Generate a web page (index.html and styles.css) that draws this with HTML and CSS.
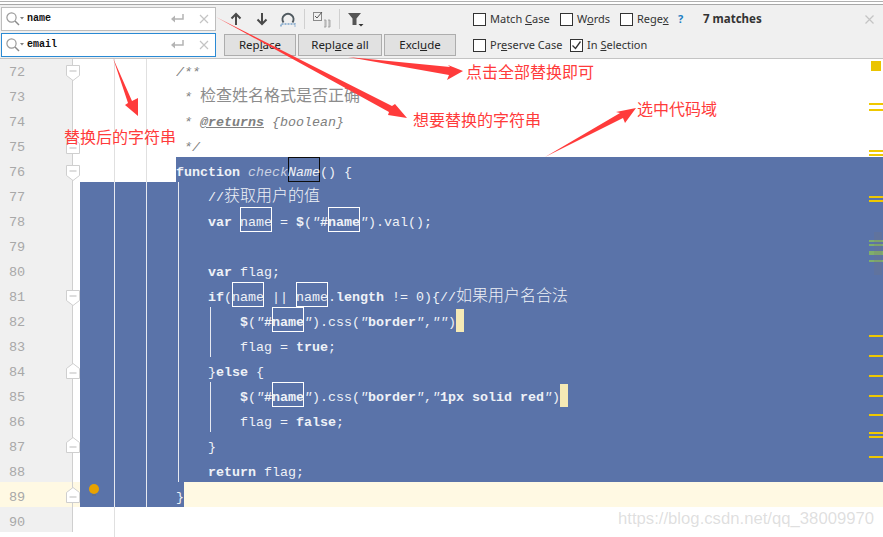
FILE: index.html
```html
<!DOCTYPE html>
<html lang="zh">
<head>
<meta charset="utf-8">
<title>Replace in editor</title>
<link rel="stylesheet" href="styles.css">
</head>
<body>
<div class="page">
  <div class="topstrip"></div>
  <div class="bar">
    <div class="field">
      <svg class="ficon" width="20" height="16" viewBox="0 0 20 16"><circle cx="6.5" cy="6.5" r="4.6" fill="none" stroke="#9a9a9a" stroke-width="1.2"/><path d="M10 10l4 4" stroke="#8a8a8a" stroke-width="1.4"/><path d="M15 6h4l-2 2.500z" fill="#808080"/></svg>
      <span class="ftext">name</span>
      <svg class="fret" width="14" height="12" viewBox="0 0 14 12"><path d="M13 1v5H3" fill="none" stroke="#b4b4b4" stroke-width="1.500"/><path d="M5 2.500L1 6l4 3.500z" fill="#b4b4b4"/></svg>
      <svg class="fx" width="10" height="10" viewBox="0 0 10 10"><path d="M1 1l8 8M9 1l-8 8" stroke="#c4c4c4" stroke-width="1.200"/></svg>
    </div>
    <div class="actions">
      <svg width="14" height="14" viewBox="0 0 14 14"><path d="M7 13V2M2.500 6.500L7 2l4.500 4.500" fill="none" stroke="#4a4a4a" stroke-width="2"/></svg>
      <svg width="14" height="14" viewBox="0 0 14 14"><path d="M7 1v11M2.500 7.500L7 12l4.500-4.500" fill="none" stroke="#4a4a4a" stroke-width="2"/></svg>
      <svg width="16" height="16" viewBox="0 0 16 16"><path d="M3.500 11.500a5.500 5.500 0 1 1 9 0" fill="none" stroke="#505a60" stroke-width="2"/><path d="M1 15.500V13h14v2.500" fill="none" stroke="#7aa3c9" stroke-width="1.500" stroke-dasharray="2 1"/></svg>
      <i class="sep"></i>
      <svg width="18" height="17" viewBox="0 0 18 17"><rect x="0.500" y="1.500" width="8" height="8" fill="none" stroke="#8a8a8a"/><path d="M2 5l2 2 5-6" fill="none" stroke="#555"/><path d="M11 9h2v7h-2M15 9h2v7h-2M12 9v7M16 9v7" fill="none" stroke="#9a9a9a" stroke-width="0.800"/></svg>
      <i class="sep"></i>
      <svg width="16" height="15" viewBox="0 0 16 15"><path d="M0 1h13L8.500 6.500V13h-4V6.500z" fill="#555"/><path d="M10.500 12h5L13 14.500z" fill="#333"/></svg>
    </div>
    <div class="options">
      <label class="opt w87"><i class="cb"></i><span>Match <u>C</u>ase</span></label>
      <label class="opt w60"><i class="cb"></i><span>W<u>o</u>rds</span></label>
      <label class="opt w58"><i class="cb"></i><span>Rege<u>x</u></span></label>
      <span class="help">?</span>
      <span class="count">7 matches</span>
      <svg class="close" width="9" height="9" viewBox="0 0 9 9"><path d="M.5 .5l8 8M8.500 .5l-8 8" stroke="#c4c4c4" stroke-width="1.200"/></svg>
    </div>
    <div class="field active">
      <svg class="ficon" width="20" height="16" viewBox="0 0 20 16"><circle cx="6.500" cy="6.500" r="4.600" fill="none" stroke="#9a9a9a" stroke-width="1.200"/><path d="M10 10l4 4" stroke="#8a8a8a" stroke-width="1.400"/><path d="M15 6h4l-2 2.500z" fill="#808080"/></svg>
      <span class="ftext">email</span>
      <svg class="fret" width="14" height="12" viewBox="0 0 14 12"><path d="M13 1v5H3" fill="none" stroke="#b4b4b4" stroke-width="1.500"/><path d="M5 2.500L1 6l4 3.500z" fill="#b4b4b4"/></svg>
      <svg class="fx" width="10" height="10" viewBox="0 0 10 10"><path d="M1 1l8 8M9 1l-8 8" stroke="#c4c4c4" stroke-width="1.200"/></svg>
    </div>
    <div class="buttons">
      <button class="btn b72">Rep<u>l</u>ace</button>
      <button class="btn b84">Repl<u>a</u>ce all</button>
      <button class="btn b72">Excl<u>u</u>de</button>
    </div>
    <div class="options">
      <label class="opt w97"><i class="cb"></i><span>Pr<u>e</u>serve Case</span></label>
      <label class="opt"><i class="cb on"><svg width="11" height="11" viewBox="0 0 11 11"><path d="M1.500 5.500l3 3 5-7" fill="none" stroke="#333" stroke-width="1.300"/></svg></i><span>In <u>S</u>election</span></label>
    </div>
  </div>

  <div class="editor">
    <div class="line"><div class="gutter"><span class="ln">72</span></div><div class="code"><div class="pad"></div><div class="txt c"><em>/**</em></div></div></div>
    <div class="line"><div class="gutter"><span class="ln">73</span></div><div class="code"><div class="pad"></div><div class="txt c"> <em>*</em> <span class="zh">检查姓名格式是否正确</span></div></div></div>
    <div class="line"><div class="gutter"><span class="ln">74</span></div><div class="code"><div class="pad"></div><div class="txt c"> <em>*</em> <b class="tag">@returns</b> <em>{boolean}</em></div></div></div>
    <div class="line"><div class="gutter"><span class="ln">75</span></div><div class="code"><div class="pad"></div><div class="txt c"> <em>*/</em></div></div></div>
    <div class="line"><div class="gutter"><span class="ln">76</span></div><div class="code"><div class="pad"></div><div class="txt s"><b>function</b> <em class="fn">check</em><em class="m dark">Name</em>() {</div></div></div>
    <div class="line"><div class="gutter"><span class="ln">77</span></div><div class="code sel"><div class="pad"></div><div class="txt s">    //<span class="zh">获取用户的值</span></div></div></div>
    <div class="line"><div class="gutter"><span class="ln">78</span></div><div class="code sel"><div class="pad"></div><div class="txt s">    <b>var</b> <span class="m">name</span> = <b>$</b>(<em>"</em><b>#</b><b class="m">name</b><em>"</em>).val();</div></div></div>
    <div class="line"><div class="gutter"><span class="ln">79</span></div><div class="code sel"><div class="pad"></div><div class="txt s"></div></div></div>
    <div class="line"><div class="gutter"><span class="ln">80</span></div><div class="code sel"><div class="pad"></div><div class="txt s">    <b>var</b> flag;</div></div></div>
    <div class="line"><div class="gutter"><span class="ln">81</span></div><div class="code sel"><div class="pad"></div><div class="txt s">    <b>if</b>(<span class="m">name</span> || <span class="m">name</span>.<b>length</b> != 0){//<span class="zh">如果用户名合法</span></div></div></div>
    <div class="line"><div class="gutter"><span class="ln">82</span></div><div class="code sel"><div class="pad"></div><div class="txt s">        <b>$</b>(<em>"</em><b>#</b><b class="m">name</b><em>"</em>).css(<em>"</em><b>border</b><em>"</em>,<em>""</em>)<span class="brace"> </span></div></div></div>
    <div class="line"><div class="gutter"><span class="ln">83</span></div><div class="code sel"><div class="pad"></div><div class="txt s">        flag = <b>true</b>;</div></div></div>
    <div class="line"><div class="gutter"><span class="ln">84</span></div><div class="code sel"><div class="pad"></div><div class="txt s">    }<b>else</b> {</div></div></div>
    <div class="line"><div class="gutter"><span class="ln">85</span></div><div class="code sel"><div class="pad"></div><div class="txt s">        <b>$</b>(<em>"</em><b>#</b><b class="m">name</b><em>"</em>).css(<em>"</em><b>border</b><em>"</em>,<em>"</em><b>1px solid red</b><em>"</em>)<span class="brace"> </span></div></div></div>
    <div class="line"><div class="gutter"><span class="ln">86</span></div><div class="code sel"><div class="pad"></div><div class="txt s">        flag = <b>false</b>;</div></div></div>
    <div class="line"><div class="gutter"><span class="ln">87</span></div><div class="code sel"><div class="pad"></div><div class="txt s">    }</div></div></div>
    <div class="line"><div class="gutter"><span class="ln">88</span></div><div class="code sel"><div class="pad"></div><div class="txt s">    <b>return</b> flag;</div></div></div>
    <div class="line cur"><div class="gutter"><span class="ln">89</span></div><div class="code"><div class="pad selpad"><i class="bulb"></i></div><div class="txt"><span class="endsel">}</span></div></div></div>
    <div class="line"><div class="gutter"><span class="ln">90</span></div><div class="code"><div class="pad"></div><div class="txt"></div></div></div>

    <svg class="fold f72" width="14" height="16" viewBox="0 0 14 16"><path d="M.5 .5h13v10L7 15.500 .5 10.500z" fill="#fff" stroke="#cfcfcf"/><path d="M3.500 6h7" stroke="#bbb"/></svg>
    <svg class="fold f75" width="14" height="16" viewBox="0 0 14 16"><path d="M.5 15.500h13v-10L7 .5 .5 5.500z" fill="#fff" stroke="#cfcfcf"/><path d="M3.500 10h7" stroke="#bbb"/></svg>
    <svg class="fold f76" width="14" height="16" viewBox="0 0 14 16"><path d="M.5 .5h13v10L7 15.500 .5 10.500z" fill="#fff" stroke="#cfcfcf"/><path d="M3.500 6h7" stroke="#bbb"/></svg>
    <svg class="fold f81" width="14" height="16" viewBox="0 0 14 16"><path d="M.5 .5h13v10L7 15.500 .5 10.500z" fill="#fff" stroke="#cfcfcf"/><path d="M3.500 6h7" stroke="#bbb"/></svg>
    <svg class="fold f84" width="14" height="16" viewBox="0 0 14 16"><path d="M.5 15.500h13v-10L7 .5 .5 5.500z" fill="#fff" stroke="#cfcfcf"/><path d="M3.500 10h7" stroke="#bbb"/></svg>
    <svg class="fold f87" width="14" height="16" viewBox="0 0 14 16"><path d="M.5 15.500h13v-10L7 .5 .5 5.500z" fill="#fff" stroke="#cfcfcf"/><path d="M3.500 10h7" stroke="#bbb"/></svg>
    <svg class="fold f89" width="14" height="16" viewBox="0 0 14 16"><path d="M.5 15.500h13v-10L7 .5 .5 5.500z" fill="#fff" stroke="#cfcfcf"/><path d="M3.500 10h7" stroke="#bbb"/></svg>

    <i class="g g114a"></i><i class="g g114b"></i><i class="g g114c"></i>
    <i class="g g146a"></i><i class="g g146b"></i>
    <i class="g g178"></i><i class="g g210a"></i><i class="g g210b"></i>

    <div class="stripe">
      <i class="mk sq"></i>
      <i class="mk y103"></i><i class="mk y108"></i><i class="mk y150"></i><i class="mk y154"></i>
      <i class="mk y196"></i><i class="mk y200"></i>
      <i class="mk gr y240"></i><i class="mk gr y244"></i><i class="mk gr y251"></i><i class="mk gr y260"></i>
      <i class="thumb"></i>
      <i class="mk y335"></i><i class="mk y355"></i><i class="mk y375"></i><i class="mk y395"></i>
      <i class="mk y414"></i><i class="mk y432"></i><i class="mk y436"></i><i class="mk y456"></i>
    </div>
  </div>

  <svg class="arrows" width="883" height="537" viewBox="0 0 883 537">
    <g fill="#ff3b3b">
      <polygon points="216,17 392,106 395,104 407,118 388,115 389,112"/>
      <polygon points="348,57 450,67 448,65 463,71 447,80 449,75"/>
      <polygon points="113,58 132,101 138,98 138,116 125,105 128,103"/>
      <polygon points="545,157 620,113 616,112 636,108 625,123 623,118"/>
    </g>
  </svg>
  <span class="note n1">点击全部替换即可</span>
  <span class="note n2">想要替换的字符串</span>
  <span class="note n3">替换后的字符串</span>
  <span class="note n4">选中代码域</span>
  <span class="mark">https://blog.csdn.net/qq_38009970</span>
</div>
</body>
</html>
```
FILE: styles.css
```css
* { box-sizing: border-box; }
html, body { margin: 0; padding: 0; }
body { width: 883px; height: 537px; overflow: hidden; background: #fff; }
.page { position: relative; width: 883px; height: 537px; overflow: hidden; font-family: "Noto Sans", sans-serif; }

.topstrip { height: 4px; margin-top: 1px; border-top: 1px solid #b0b0b0; border-bottom: 1px solid #a8a8a8; background: #fff; }

.bar {
  position: relative; z-index: 1;
  display: grid;
  grid-template-columns: 224px 249px 1fr;
  grid-template-rows: 26px 26px;
  height: 54px;
  padding-top: 2px;
  background: #f0f0f0;
  border-bottom: 1px solid #c4c4c4;
}
.field {
  display: flex; align-items: center;
  width: 215px; height: 24px; margin-left: 1px;
  background: #fff; border: 1px solid #bdbdbd;
  position: relative;
}
.field.active { border-color: #2a8ad4; }
.ficon { margin-left: 3px; flex: none; }
.ftext { margin-left: 2px; font: bold 10px/1 "Liberation Mono", monospace; color: #111; flex: 1; }
.fret { flex: none; margin-right: 15px; }
.fx { flex: none; margin-right: 6px; }

.actions { display: flex; align-items: center; padding-left: 5px; height: 24px; }
.actions svg:nth-child(1) { margin-right: 12px; }
.actions svg:nth-child(2) { margin-right: 11px; }
.sep { width: 1px; height: 20px; background: #d0d0d0; margin: 0 8px; }

.buttons { display: flex; gap: 2px; height: 22px; margin-top: 1px; }
.btn {
  height: 22px; padding: 0 0 2px; background: #e1e1e1; border: 1px solid #adadad;
  font: 11.500px "Noto Sans", sans-serif; color: #222;
}
.b72 { width: 72px; }
.b84 { width: 84px; }

.options { display: flex; align-items: center; height: 24px; font-size: 11px; color: #333; }
.opt { display: flex; align-items: center; gap: 4px; white-space: nowrap; }
.opt span { padding-bottom: 2px; }
.w87 { width: 87px; }
.w60 { width: 60px; }
.w58 { width: 58px; }
.w97 { width: 97px; }
.cb { display: flex; align-items: center; justify-content: center; width: 13px; height: 13px; border: 1px solid #333; background: #fff; flex: none; }
.help { width: 25px; padding-bottom: 2px; color: #1f7fc4; font-weight: 700; font-size: 11px; }
.count { padding-bottom: 2px; font-weight: 700; font-size: 11.500px; color: #333; flex: 1; }
.close { margin-right: 9px; }

.editor { position: relative; margin-top: -2px; font: 13.333px/31px "Liberation Mono", monospace; }
.line { display: flex; height: 25px; }
.gutter { display: flex; flex: none; width: 80px; height: 25px; background: #fff; }
.ln {
  width: 73px; height: 25px; padding-left: 9px; background: #f0f0f0;
  border-right: 1px solid #cfcfcf; color: #a8a8a8;
  font: 13.500px/31px "Liberation Mono", monospace;
}
.code { display: flex; flex: 1; min-width: 0; height: 25px; }
.code.sel { background: #5a73a9; }
.pad { width: 96px; flex: none; }
.txt { flex: 1; height: 25px; white-space: pre; color: #808080; overflow: hidden; }
.txt.s { background: #5a73a9; color: #eef1f7; }
.txt b { font-weight: 700; }
.txt.c { color: #808080; }
.zh { font: 16px/22px "Noto Sans CJK SC", sans-serif; }
.txt.s .zh { font-weight: 300; }
.c .zh { color: #8c8c8c; }
.tag { text-decoration: underline; font-style: italic; }
.fn { color: #c9d1e2; }
.m { display: inline-block; width: 32px; height: 25px; box-shadow: inset 0 0 0 1px #fff; vertical-align: baseline; }
.m.dark { box-shadow: inset 0 0 0 1px #0c0c0c; }
.brace { display: inline-block; width: 8px; height: 23px; background: #f5e9b5; vertical-align: top; margin-top: 2px; }

.cur { background: #fff9e3; }
.cur .gutter, .cur .ln { background: #fff9e3; }
.cur .ln { color: #a8a8a8; }
.selpad { background: #5a73a9; position: relative; }
.endsel { display: inline-block; width: 8px; height: 25px; background: #5a73a9; color: #eef1f7; vertical-align: top; }
.bulb { position: absolute; left: 9px; top: 2px; width: 10px; height: 10px; border-radius: 50%; background: #e8a200; }
.bulb::after { content: ""; position: absolute; left: 3px; top: 10px; width: 4px; height: 2px; background: #5f6f90; }

.fold { position: absolute; left: 66px; }
.f72 { top: 8px; }
.f75 { top: 81px; }
.f76 { top: 108px; }
.f81 { top: 233px; }
.f84 { top: 306px; }
.f87 { top: 380px; }
.f89 { top: 430px; }

.g { position: absolute; width: 1px; background: #e0e0e0; }
.g114a { left: 114px; top: 2px; height: 123px; }
.g114b { left: 114px; top: 125px; height: 325px; background: #e6e9f1; }
.g114c { left: 114px; top: 450px; height: 40px; }
.g146a { left: 146px; top: 2px; height: 123px; }
.g146b { left: 146px; top: 125px; height: 325px; background: #e6e9f1; }
.g178 { left: 178px; top: 125px; height: 300px; background: #e6e9f1; }
.g210a { left: 210px; top: 250px; height: 50px; background: #e6e9f1; }
.g210b { left: 210px; top: 325px; height: 50px; background: #e6e9f1; }

.stripe { position: absolute; inset: 0; pointer-events: none; }
.mk { position: absolute; left: 869px; width: 14px; height: 2px; background: #efc800; }
.mk.sq { left: 871px; top: 4px; width: 10px; height: 10px; background: #eac400; }
.mk.gr { background: #7fae6b; }
.y103 { top: 46px; } .y108 { top: 52px; } .y150 { top: 93px; } .y154 { top: 97px; }
.y196 { top: 139px; } .y200 { top: 143px; }
.y240 { top: 183px; } .y244 { top: 187px; } .mk.y251 { top: 194px; height: 4px; } .y260 { top: 203px; }
.thumb { position: absolute; left: 874px; top: 175px; width: 8px; height: 43px; background: rgba(120,120,120,.22); }
.y335 { top: 278px; } .y355 { top: 298px; } .y375 { top: 318px; } .y395 { top: 338px; }
.y414 { top: 357px; } .y432 { top: 375px; } .y436 { top: 379px; } .y456 { top: 399px; }

.arrows { position: absolute; left: 0; top: 0; z-index: 2; pointer-events: none; }
.note { position: absolute; z-index: 3; font: 16px/20px "Noto Sans CJK SC", sans-serif; color: #ff3b3b; white-space: nowrap; }
.n1 { left: 466px; top: 61px; }
.n2 { left: 413px; top: 109px; }
.n3 { left: 64px; top: 126px; }
.n4 { left: 637px; top: 98px; }
.mark { position: absolute; z-index: 3; left: 618px; top: 509px; font: 16.700px/20px "Liberation Sans", sans-serif; color: rgba(170,170,170,.38); white-space: nowrap; }
```
